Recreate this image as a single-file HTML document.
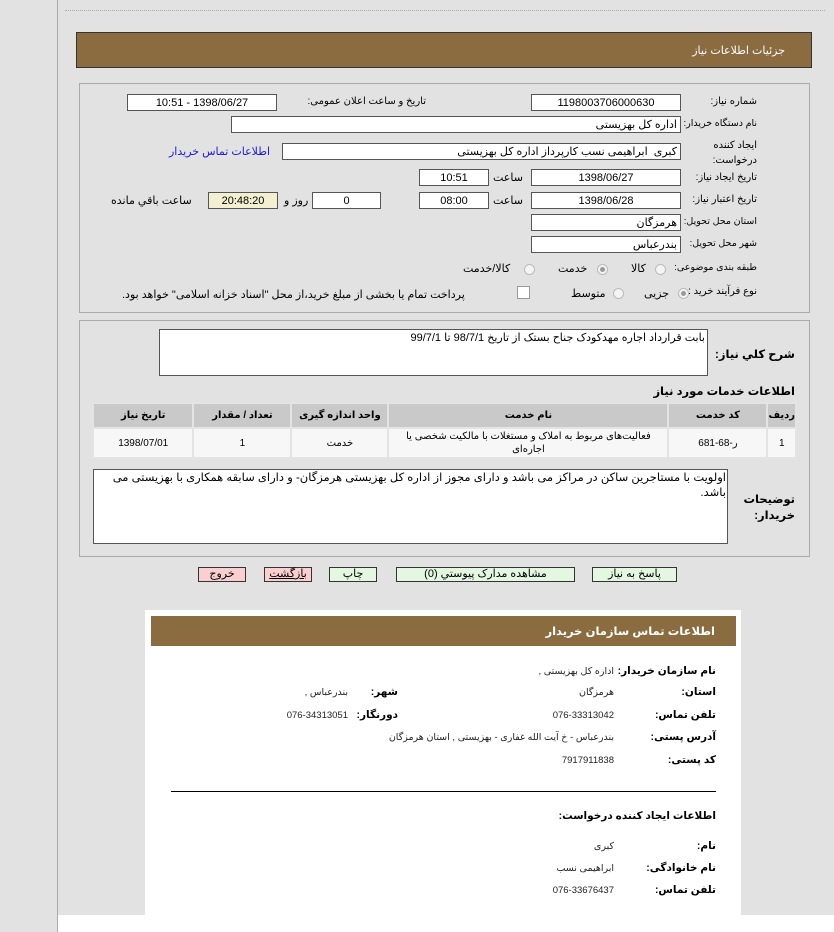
<!DOCTYPE html>
<html><head><meta charset="utf-8">
<style>
*{margin:0;padding:0;box-sizing:border-box}
html,body{width:834px;height:932px;overflow:hidden;background:#fff}
body{position:relative;font-family:"Liberation Sans","DejaVu Sans",sans-serif;font-size:10px;color:#000;direction:rtl}
.a{position:absolute;white-space:nowrap}
.r{position:absolute;white-space:nowrap;text-align:right}
.in{position:absolute;background:#fff;border:1px solid #555;height:17px;line-height:16px;padding:0 3px;font-size:11px;white-space:nowrap;overflow:hidden}
.c{text-align:center}
.lbl{font-size:10px}
.sm{font-size:9.5px}
.rad{position:absolute;width:11px;height:11px;border-radius:50%;border:1px solid #bbb;background:#f4f4f4}
.rad.on::after{content:"";position:absolute;left:2px;top:2px;width:5px;height:5px;border-radius:50%;background:#999}
.btn{position:absolute;height:15px;border:1px solid #333;line-height:13px;text-align:center;font-size:11px}
.g{background:#e3f7e1}.p{background:#f9cfcf}
table{border-collapse:separate;border-spacing:2px;background:#e4e4e4}
td,th{font-size:10px;text-align:center}
th{background:#c9c9c9;height:23px;font-weight:bold}
td{background:#f7f7f7;height:28px;line-height:13px;padding:0 4px}
.k{font-weight:bold;font-size:10.5px}
.v{font-size:9.5px;color:#222}
</style></head><body>
<div class="a" style="left:0;top:0;width:57px;height:932px;background:#e2e2e2"></div>
<div class="a" style="left:57px;top:0;width:1px;height:932px;background:#aaa"></div>
<div class="a" style="left:58px;top:0;width:776px;height:915px;background:#e2e2e2"></div>
<div class="a" style="left:65px;top:10px;width:760px;height:0;border-top:1px dotted #aaa"></div>

<div class="a" style="left:76px;top:32px;width:736px;height:36px;background:#8b6c40;border:1px solid #333"></div>
<div class="r" style="right:49px;top:44px;color:#fff;font-size:11px">جزئیات اطلاعات نیاز</div>

<div class="a" style="left:79px;top:83px;width:731px;height:230px;border:1px solid #aaa"></div>
<div class="r lbl" style="right:77px;top:96px">شماره نیاز:</div>
<div class="in c" style="left:531px;top:94px;width:150px">1198003706000630</div>
<div class="r lbl" style="right:408px;top:96px">تاریخ و ساعت اعلان عمومی:</div>
<div class="in c" style="left:127px;top:94px;width:150px">1398/06/27 - 10:51</div>

<div class="r lbl sm" style="right:77px;top:118px">نام دستگاه خریدار:</div>
<div class="in" style="left:231px;top:116px;width:450px;text-align:right">اداره کل بهزیستی</div>

<div class="r lbl" style="right:77px;top:138px;line-height:15px">ایجاد کننده<br>درخواست:</div>
<div class="in" style="left:282px;top:143px;width:399px;text-align:right">کبری&nbsp; ابراهیمی نسب کارپرداز اداره کل بهزیستی</div>
<div class="a lbl" style="left:169px;top:145px;color:#1a1ad0;font-size:11px">اطلاعات تماس خریدار</div>

<div class="r lbl" style="right:77px;top:172px">تاریخ ایجاد نیاز:</div>
<div class="in c" style="left:531px;top:169px;width:150px">1398/06/27</div>
<div class="a lbl" style="left:493px;top:171px;font-size:11px">ساعت</div>
<div class="in c" style="left:419px;top:169px;width:70px">10:51</div>

<div class="r lbl" style="right:77px;top:194px">تاریخ اعتبار نیاز:</div>
<div class="in c" style="left:531px;top:192px;width:150px">1398/06/28</div>
<div class="a lbl" style="left:493px;top:194px;font-size:11px">ساعت</div>
<div class="in c" style="left:419px;top:192px;width:70px">08:00</div>
<div class="in c" style="left:312px;top:192px;width:69px">0</div>
<div class="a lbl" style="left:284px;top:194px;font-size:11px">روز و</div>
<div class="in c" style="left:208px;top:192px;width:70px;background:#f3f0d2">20:48:20</div>
<div class="a lbl" style="left:111px;top:194px;font-size:11px">ساعت باقي مانده</div>

<div class="r lbl sm" style="right:77px;top:216px">استان محل تحویل:</div>
<div class="in" style="left:531px;top:214px;width:150px;text-align:right">هرمزگان</div>
<div class="r lbl sm" style="right:77px;top:238px">شهر محل تحویل:</div>
<div class="in" style="left:531px;top:236px;width:150px;text-align:right">بندرعباس</div>

<div class="r lbl sm" style="right:77px;top:262px">طبقه بندی موضوعی:</div>
<div class="rad" style="left:655px;top:264px"></div><div class="a lbl" style="left:631px;top:262px;font-size:11px">کالا</div>
<div class="rad on" style="left:597px;top:264px"></div><div class="a lbl" style="left:558px;top:262px;font-size:11px">خدمت</div>
<div class="rad" style="left:524px;top:264px"></div><div class="a lbl" style="left:463px;top:262px;font-size:11px">کالا/خدمت</div>

<div class="r lbl" style="right:77px;top:286px">نوع فرآیند خرید :</div>
<div class="rad on" style="left:678px;top:288px"></div><div class="a lbl" style="left:644px;top:287px;font-size:11px">جزیی</div>
<div class="rad" style="left:613px;top:288px"></div><div class="a lbl" style="left:571px;top:287px;font-size:11px">متوسط</div>
<div class="a" style="left:517px;top:286px;width:13px;height:13px;border:1px solid #999;background:#fff"></div>
<div class="a lbl" style="left:122px;top:288px;font-size:11px">پرداخت تمام یا بخشی از مبلغ خرید،از محل "اسناد خزانه اسلامی" خواهد بود.</div>

<div class="a" style="left:79px;top:320px;width:731px;height:237px;border:1px solid #aaa"></div>
<div class="a" style="left:159px;top:329px;width:549px;height:47px;background:#fff;border:1px solid #555"></div>
<div class="r lbl" style="right:129px;top:331px;font-size:11px">بابت قرارداد اجاره مهدکودک جناح بستک از تاریخ 98/7/1 تا 99/7/1</div>
<div class="r" style="right:39px;top:347px;font-weight:bold;font-size:11.5px">شرح کلي نياز:</div>
<div class="r" style="right:39px;top:384px;font-weight:bold;font-size:11.5px">اطلاعات خدمات مورد نیاز</div>

<table class="a" style="left:92px;top:402px;width:705px" dir="rtl">
<tr><th style="width:26px">ردیف</th><th style="width:97px">کد خدمت</th><th style="width:278px">نام خدمت</th><th style="width:95px">واحد اندازه گیری</th><th style="width:96px">تعداد / مقدار</th><th>تاریخ نیاز</th></tr>
<tr><td>1</td><td>ر-68-681</td><td style="white-space:normal;padding:0 10px">فعالیت‌های مربوط به املاک و مستغلات با مالکیت شخصی یا اجاره‌ای</td><td>خدمت</td><td>1</td><td>1398/07/01</td></tr>
</table>

<div class="a" style="left:93px;top:469px;width:635px;height:75px;background:#fff;border:1px solid #555"></div>
<div class="a lbl" style="left:96px;top:471px;width:630px;white-space:normal;text-align:right;line-height:15px;font-size:11.5px">اولویت با مستاجرین ساکن در مراکز می باشد و دارای مجوز از اداره کل بهزیستی هرمزگان- و دارای سابقه همکاری با بهزیستی می باشد.</div>
<div class="r" style="right:39px;top:492px;font-weight:bold;font-size:11.5px;line-height:16px">توضیحات<br>خریدار:</div>

<div class="btn g" style="left:592px;top:567px;width:85px">پاسخ به نیاز</div>
<div class="btn g" style="left:396px;top:567px;width:179px">مشاهده مدارک پیوستي (0)</div>
<div class="btn g" style="left:329px;top:567px;width:48px">چاپ</div>
<div class="btn p" style="left:264px;top:567px;width:48px;text-decoration:underline">بازگشت</div>
<div class="btn p" style="left:198px;top:567px;width:48px">خروج</div>

<div class="a" style="left:145px;top:610px;width:596px;height:305px;background:#fff"></div>
<div class="a" style="left:151px;top:616px;width:585px;height:30px;background:#8b6c40"></div>
<div class="r" style="right:119px;top:624px;color:#fff;font-weight:bold;font-size:11.5px">اطلاعات تماس سازمان خریدار</div>

<div class="r k" style="right:118px;top:665px">نام سازمان خریدار:</div><div class="r v" style="right:220px;top:666px">اداره کل بهزیستی ,</div>
<div class="r k" style="right:118px;top:686px">استان:</div><div class="r v" style="right:220px;top:687px">هرمزگان</div>
<div class="r k" style="right:436px;top:686px">شهر:</div><div class="r v" style="right:486px;top:687px">بندرعباس ,</div>
<div class="r k" style="right:118px;top:709px">تلفن تماس:</div><div class="r v" style="right:220px;top:710px">076-33313042</div>
<div class="r k" style="right:436px;top:709px">دورنگار:</div><div class="r v" style="right:486px;top:710px">076-34313051</div>
<div class="r k" style="right:118px;top:731px">آدرس پستی:</div><div class="r v" style="right:220px;top:732px">بندرعباس - خ آیت الله غفاری - بهزیستی , استان هرمزگان</div>
<div class="r k" style="right:118px;top:754px">کد پستی:</div><div class="r v" style="right:220px;top:755px">7917911838</div>
<div class="a" style="left:171px;top:791px;width:545px;height:1px;background:#000"></div>
<div class="r k" style="right:118px;top:810px">اطلاعات ایجاد کننده درخواست:</div>
<div class="r k" style="right:118px;top:840px">نام:</div><div class="r v" style="right:220px;top:841px">کبری</div>
<div class="r k" style="right:118px;top:862px">نام خانوادگی:</div><div class="r v" style="right:220px;top:863px">ابراهیمی نسب</div>
<div class="r k" style="right:118px;top:884px">تلفن تماس:</div><div class="r v" style="right:220px;top:885px">076-33676437</div>
</body></html>
